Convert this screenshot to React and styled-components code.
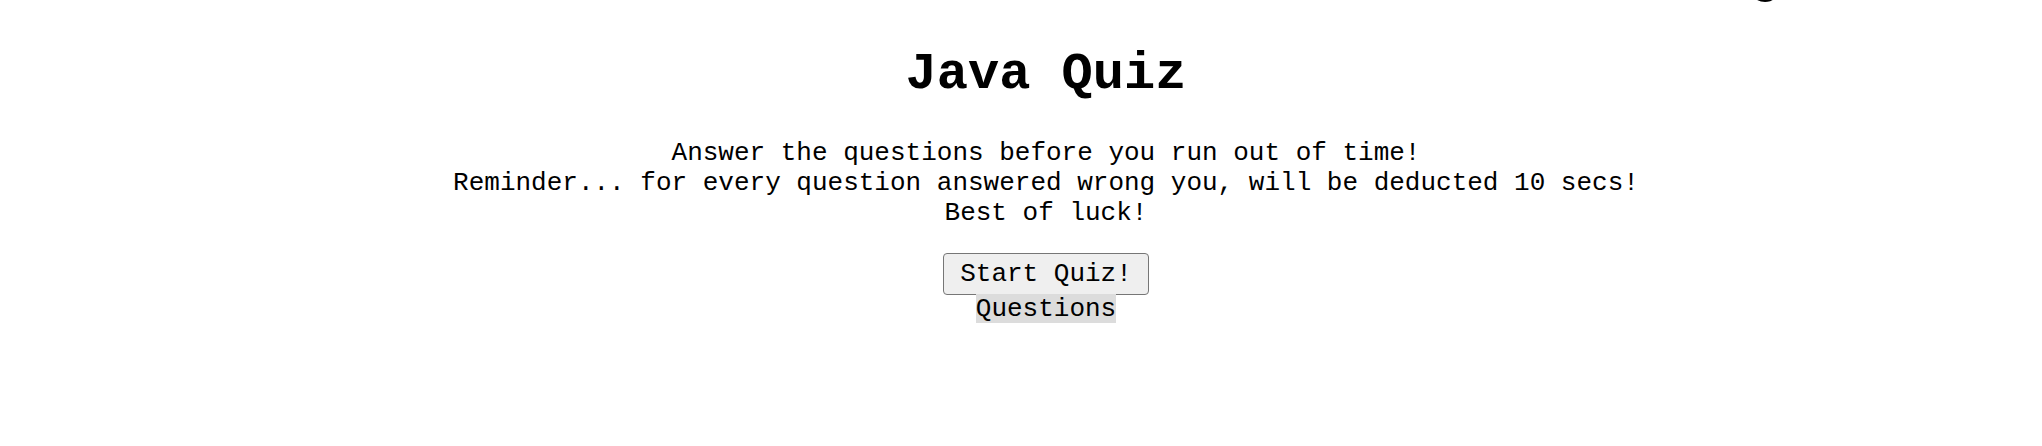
import React from 'react';
import styled, { createGlobalStyle } from 'styled-components';

const GlobalStyle = createGlobalStyle`
    body {
        margin: 8px;
        background: #fff;
        color: #000;
        font-family: "Liberation Mono", "Courier New", monospace;
        font-size: 26px;
    }
`;

const TopBar = styled.header`
    position: absolute;
    top: -46px;
    left: 1690px;
    font-size: 50px;
    line-height: 1;
    font-weight: bold;
    white-space: nowrap;
`;

const Main = styled.main`
    display: flex;
    flex-direction: column;
    align-items: center;
    padding-left: 50px;
    text-align: center;
`;

const Title = styled.h1`
    margin: 37.4px 0 33.5px;
    font-size: 52px;
    font-weight: bold;
`;

const Intro = styled.p`
    margin: 0 0 25px;
`;

const StartButton = styled.button`
    font-family: inherit;
    font-size: 26px;
    color: #000;
    background: #efefef;
    border: 1.5px solid #767676;
    border-radius: 4px;
    padding: 5px 16px;
    cursor: pointer;
`;

const Questions = styled.div`
    margin-top: 1px;
    line-height: 27px;
    span {
        background: #dcdcdc;
    }
`;

export default function App() {
    return (
        <>
            <GlobalStyle />
            <TopBar>Highscores</TopBar>
            <Main>
                <Title>Java Quiz</Title>
                <Intro>
                    Answer the questions before you run out of time!<br />
                    Reminder... for every question answered wrong you, will be deducted 10 secs!<br />
                    Best of luck!
                </Intro>
                <StartButton>Start Quiz!</StartButton>
                <Questions><span>Questions</span></Questions>
            </Main>
        </>
    );
}
